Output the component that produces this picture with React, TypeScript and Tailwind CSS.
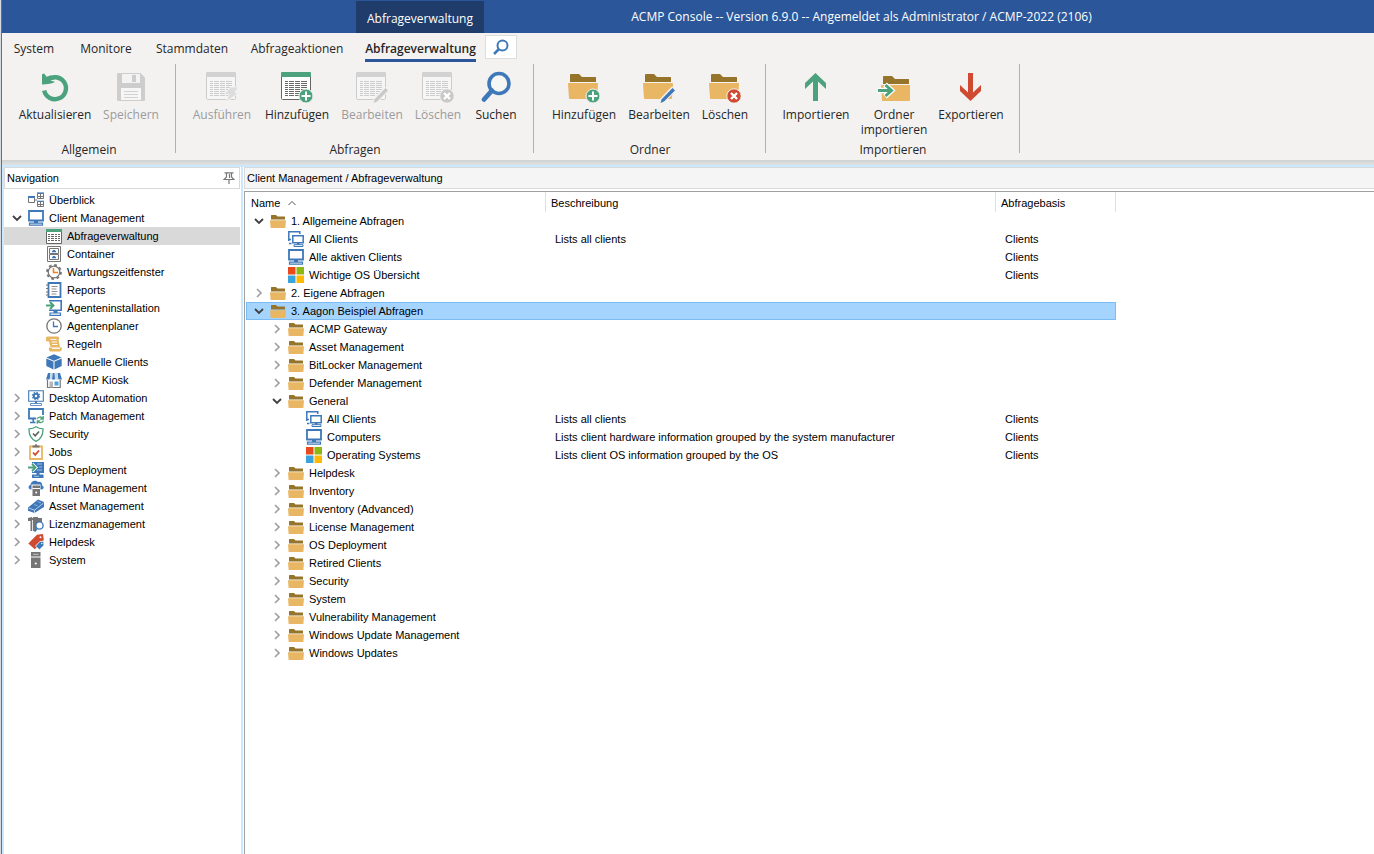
import { Fragment, useState } from "react";
import type { ReactNode } from "react";

const BLUE = "#3e78b8";
const GREEN = "#4ba27c";
const RED = "#cf4a30";
const GRAY = "#757575";
const SAND = "#e9b664";
const BROWN = "#96742a";

function Svg16({ children }: { children: ReactNode }) {
  return (
    <svg className="h-4 w-4 shrink-0" viewBox="0 0 16 16" fill="none" aria-hidden="true">
      {children}
    </svg>
  );
}

function Svg32({ children }: { children: ReactNode }) {
  return (
    <svg className="h-8 w-8 shrink-0" viewBox="0 0 32 32" fill="none" aria-hidden="true">
      {children}
    </svg>
  );
}

/* ---------- large ribbon icons ---------- */

function RefreshIcon() {
  return (
    <Svg32>
      <path d="M5.2 19.5A11 11 0 1 0 8.2 9.4" stroke={GREEN} strokeWidth="4.4" />
      <path d="M3 3.2l2.2-.8 2.4 3.4 4.4-1.6v3.4L9.5 9.8c2 .2 4 0 6.5 1.2-2.5 1.7-7.5 2.4-13 2.4z" fill={GREEN} />
    </Svg32>
  );
}

function SaveIcon() {
  return (
    <Svg32>
      <path d="M3 2h22.500l4.500 4.500V29a1 1 0 0 1-1 1H3a1 1 0 0 1-1-1V3a1 1 0 0 1 1-1z" fill="#cdcdcd" />
      <path d="M7 3h18v9H7z" fill="#f3f3f3" />
      <path d="M17 4h4v7h-4z" fill="#cdcdcd" />
      <path d="M6 17h20v12H6z" fill="#f6f6f6" />
      <path d="M9 20.500h14M9 23.500h14M9 26.500h14" stroke="#d2d2d2" />
    </Svg32>
  );
}

function TableGlyph({ muted }: { muted?: boolean }) {
  const line = muted ? "#cccccc" : "#6a6a6a";
  const rows = [10, 12, 14, 16, 18, 20, 22, 24];
  return (
    <>
      <path d="M.5 4v23.500a1 1 0 0 0 1 1h27a1 1 0 0 0 1-1V4z" fill={muted ? "#f6f6f6" : "#ffffff"} stroke={muted ? "#cccccc" : "#666666"} />
      <path d="M0 2a1 1 0 0 1 1-1h28a1 1 0 0 1 1 1v4H0z" fill={muted ? "#d2d2d2" : GREEN} />
      {rows.map((y) => (
        <path key={y} d={`M4 ${y + 0.5}h3M8 ${y + 0.5}h5M14 ${y + 0.5}h5M20 ${y + 0.5}h6`} stroke={line} />
      ))}
    </>
  );
}

function PlusBadge() {
  return (
    <>
      <circle cx="25" cy="25" r="7" fill={GREEN} stroke="#f3f2f1" />
      <path d="M25 20.500v9M20.500 25h9" stroke="#fff" strokeWidth="2" />
    </>
  );
}

function CrossBadge({ color }: { color: string }) {
  return (
    <>
      <circle cx="25" cy="25" r="7.2" fill={color} stroke="#f3f2f1" />
      <path d="M22 22l6 6M28 22l-6 6" stroke="#fff" strokeWidth="2.4" />
    </>
  );
}

function PencilBadge({ color }: { color: string }) {
  return (
    <>
      <path d="M31 17.500L19 30" stroke="#f3f2f1" strokeWidth="6" />
      <path d="M29.500 17l2.500 2.500-11 11-3.500 1.500 1.200-3.700z" fill={color} />
    </>
  );
}

function FolderGlyph() {
  return (
    <>
      <path d="M2 11V4a1 1 0 0 1 1-1h8l3 3h13.500a.5.5 0 0 1 .5.5V11z" fill={BROWN} />
      <path d="M.8 12h28.400a.8.8 0 0 1 .8.9l-1 14.300a1 1 0 0 1-1 .8H2a1 1 0 0 1-1-.8L0 12.900a.8.8 0 0 1 .8-.9z" fill={SAND} />
    </>
  );
}

function SearchIcon() {
  return (
    <Svg32>
      <path d="M12 19.500L4 28.500" stroke={BLUE} strokeWidth="4.8" strokeLinecap="round" />
      <circle cx="19" cy="12.5" r="10" stroke={BLUE} strokeWidth="3.6" fill="#fff" fillOpacity="0.3" />
    </Svg32>
  );
}

const icons32 = {
  refresh: <RefreshIcon />,
  save: <SaveIcon />,
  run: (
    <Svg32>
      <TableGlyph muted />
      <path d="M25 16h7.500l-3.500 5.500h4L19.500 31.500l3.500-8h-5z" fill="#dddddd" stroke="#f3f2f1" />
    </Svg32>
  ),
  tableAdd: (
    <Svg32>
      <TableGlyph />
      <PlusBadge />
    </Svg32>
  ),
  tableEdit: (
    <Svg32>
      <TableGlyph muted />
      <PencilBadge color="#c9c9c9" />
    </Svg32>
  ),
  tableDelete: (
    <Svg32>
      <TableGlyph muted />
      <CrossBadge color="#c9c9c9" />
    </Svg32>
  ),
  search: <SearchIcon />,
  folderAdd: (
    <Svg32>
      <FolderGlyph />
      <PlusBadge />
    </Svg32>
  ),
  folderEdit: (
    <Svg32>
      <FolderGlyph />
      <PencilBadge color={BLUE} />
    </Svg32>
  ),
  folderDelete: (
    <Svg32>
      <FolderGlyph />
      <CrossBadge color={RED} />
    </Svg32>
  ),
  arrowUp: (
    <Svg32>
      <path d="M15.500 2L26 12v6l-8-7.500V30h-5V10.500L5 18v-6z" fill={GREEN} />
    </Svg32>
  ),
  folderImport: (
    <Svg32>
      <g transform="translate(3 2)">
        <FolderGlyph />
      </g>
      <path d="M0 19.500h13M7 13.500l6.500 6-6.500 6" stroke="#fff" strokeWidth="5.5" />
      <path d="M0 19.500h13M7.500 14l6 5.500-6 5.500" stroke={GREEN} strokeWidth="3" />
    </Svg32>
  ),
  arrowDown: (
    <Svg32>
      <path d="M15.500 30L26 20v-6l-8 7.500V2h-5v19.500L5 14v6z" fill={RED} />
    </Svg32>
  ),
};

/* ---------- small tree icons ---------- */

const icons16 = {
  folder: (
    <Svg16>
      <path d="M1 6.500V2.500A.5.5 0 0 1 1.500 2H6l1.500 1.500h7a.5.5 0 0 1 .5.5v2.500z" fill={BROWN} />
      <path d="M0 7.300h16l-.6 7.200a.6.6 0 0 1-.6.5H1.200a.6.6 0 0 1-.6-.5z" fill={SAND} />
    </Svg16>
  ),
  overview: (
    <Svg16>
      <path d="M.5 5.500h6v5h-6z" fill="#fff" stroke={GRAY} />
      <path d="M0 4h7v2H0z" fill={BLUE} />
      <path d="M7 8h2" stroke={GRAY} />
      <path d="M9.500 1.500h6v5h-6zM9.500 9.500h6v5h-6zM12.500 1v6M9 4.500h7M12.500 9v6M9 12.500h7" stroke={GRAY} />
      <path d="M9 0h7v2H9zM9 8.500h7v1.500H9z" fill={BLUE} fillOpacity="0.6" />
    </Svg16>
  ),
  monitor: (
    <Svg16>
      <path d="M1 1h14v9.500H1z" fill="#fff" stroke={BLUE} strokeWidth="1.8" />
      <path d="M6 11h4v2H6z" fill={BLUE} />
      <path d="M1.500 13.200h13v2h-13z" fill="#fff" stroke={BLUE} strokeWidth="1.2" />
    </Svg16>
  ),
  monitors: (
    <Svg16>
      <path d="M.8 10V.8h11V3M.8 8.500h2.200" stroke={BLUE} strokeWidth="1.5" />
      <path d="M1 12.500h2.500" stroke={BLUE} strokeWidth="1.5" />
      <path d="M4.800 4.800h10.400v7H4.800z" fill="#fff" stroke={BLUE} strokeWidth="1.5" />
      <path d="M9 12h2.500v2H9z" fill={BLUE} />
      <path d="M6 13.700h9v1.800H6z" fill="#fff" stroke={BLUE} />
    </Svg16>
  ),
  windows: (
    <Svg16>
      <path d="M0 0h7.500v7.500H0z" fill="#e8491d" />
      <path d="M8.500 0H16v7.500H8.500z" fill="#8cb811" />
      <path d="M0 8.500h7.500V16H0z" fill="#3ba3dc" />
      <path d="M8.500 8.500H16V16H8.500z" fill="#ffb900" />
    </Svg16>
  ),
  table: (
    <Svg16>
      <path d="M.5 1.500h15v14H.5z" fill="#fff" stroke="#666666" />
      <path d="M0 1h16v3H0z" fill={GREEN} />
      <path d="M2 6.500h2M5 6.500h3M9 6.500h2M12 6.500h2M2 8.500h2M5 8.500h3M9 8.500h2M12 8.500h2M2 10.500h2M5 10.500h3M9 10.500h2M12 10.500h2M2 12.500h2M5 12.500h3M9 12.500h2M12 12.500h2" stroke="#666666" />
    </Svg16>
  ),
  container: (
    <Svg16>
      <path d="M1.500.5h13v15h-13z" fill="#fff" stroke={GRAY} />
      <path d="M3.500 2.500h9v5h-9zM3.500 8.500h9v5h-9z" stroke={GRAY} />
      <path d="M6 5.500h4M6 11.500h4" stroke={BLUE} strokeWidth="1.4" />
      <path d="M7 4.500h2M7 10.500h2" stroke={BLUE} />
    </Svg16>
  ),
  gearClock: (
    <Svg16>
      <circle cx="8" cy="8" r="7" stroke={GRAY} strokeWidth="1.8" strokeDasharray="2.75 2.75" />
      <circle cx="8" cy="8" r="5.8" stroke={GRAY} strokeWidth="1.3" fill="#fff" />
      <path d="M7.500 4v4.500H12" stroke="#ee8322" strokeWidth="1.6" />
    </Svg16>
  ),
  report: (
    <Svg16>
      <path d="M2.500 1h12v14h-12z" fill="#fff" stroke={BLUE} strokeWidth="1.8" />
      <path d="M0 3h3M0 6.500h3M0 10h3M0 13h3" stroke={GRAY} strokeWidth="1.2" />
      <path d="M5.500 4.500h6M5.500 7h5M5.500 9.500h6M5.500 12h5" stroke={GRAY} strokeWidth="0.8" />
    </Svg16>
  ),
  agentInstall: (
    <Svg16>
      <path d="M3 .8h12.200v9.500H3" stroke={BLUE} strokeWidth="1.6" />
      <path d="M7.500 11h4v2h-4z" fill={BLUE} />
      <path d="M4 13h10.500v2.300H4z" fill="#fff" stroke={BLUE} strokeWidth="1.2" />
      <path d="M0 5.500h7M4 2l3.500 3.500L4 9" stroke={GREEN} strokeWidth="2" />
    </Svg16>
  ),
  clock: (
    <Svg16>
      <circle cx="8" cy="8" r="7.2" stroke={GRAY} strokeWidth="1.3" fill="#fff" />
      <path d="M7.500 3.500v5H12" stroke={BLUE} strokeWidth="1.3" />
    </Svg16>
  ),
  scroll: (
    <Svg16>
      <path d="M2 .5h9.500A1.800 1.800 0 0 1 13 3l-.5 1 1.500 7H4.500L3 5.500H1.800A2 2 0 0 1 2 .5z" fill={SAND} />
      <path d="M3 11.500h13c0 2.500-1 4-2.500 4h-9C3 15.500 2.500 13.500 3 11.500z" fill={SAND} />
      <path d="M4.500 3.500h6M5.500 6h5.500M6 8.500h5.500M6 12.500h8" stroke="#fff" strokeWidth="0.9" />
    </Svg16>
  ),
  cube: (
    <Svg16>
      <path d="M8 .3l7.500 3.200L8 6.700.5 3.500z" fill={BLUE} />
      <path d="M.3 4.500l7.200 3.100v8L.3 12z" fill={BLUE} />
      <path d="M15.700 4.500L8.500 7.600v8l7.200-3.600z" fill={BLUE} />
    </Svg16>
  ),
  kiosk: (
    <Svg16>
      <path d="M2 1h2.500L3.700 7.500H0zM8.500 1h-2L6 7.500h3zM11.500 1H14l2 6.500h-3.700z" fill={BLUE} />
      <path d="M4.500 1h2L6 7.500H3.700zM9 1h2.500l.8 6.500H9z" fill="#c9dcef" />
      <path d="M1.500 8v7.500h12.700V8" stroke={GRAY} strokeWidth="1.2" />
      <path d="M3.500 9.500h3.500v6H3.500z" fill="#b5b5b5" />
      <path d="M8.500 9.500h4v4h-4z" fill="#4aa3df" />
    </Svg16>
  ),
  desktopGear: (
    <Svg16>
      <path d="M.7.7h14.600v10.600H.7z" fill="#fff" stroke={BLUE} strokeWidth="1.1" />
      <circle cx="8" cy="6" r="2.2" stroke={BLUE} strokeWidth="2" />
      <circle cx="8" cy="6" r="3.7" stroke={BLUE} strokeWidth="1.1" strokeDasharray="1.5 1.4" />
      <path d="M7 11.500h2v2H7z" fill={BLUE} />
      <path d="M2.500 13.500h11v2h-11z" fill="#fff" stroke={BLUE} strokeWidth="0.8" />
    </Svg16>
  ),
  patch: (
    <Svg16>
      <path d="M8 10.500H1V1h14v6" stroke={BLUE} strokeWidth="1.8" />
      <path d="M5 11l.5 3M2 14.500h5.500" stroke={BLUE} strokeWidth="1.6" />
      <path d="M9 11c1-2.500 4.500-2.500 5.500-.7M15.200 8v3h-3M15.500 12.500c-1 2.500-4.500 2.700-5.700.8M9.300 15.800v-3h3" stroke={GREEN} strokeWidth="1.3" />
    </Svg16>
  ),
  shield: (
    <Svg16>
      <path d="M8 .8c2 1.500 4.500 2 7 2 .2 6-1.500 10.200-7 12.500C2.500 13 .8 8.800 1 2.800c2.500 0 5-.5 7-2z" fill="#fff" stroke={GREEN} strokeWidth="1.3" />
      <path d="M5 7.500l2.200 2.300L11 5.500" stroke="#5f5f5f" strokeWidth="1.6" />
    </Svg16>
  ),
  jobs: (
    <Svg16>
      <path d="M2 2.500h12V15H2z" fill="#fff" stroke={SAND} strokeWidth="1.8" />
      <path d="M4.500 3.500v-2H6.800a1.200 1.200 0 0 1 2.400 0h2.300v2z" fill={GRAY} />
      <path d="M5 8.500L7.200 10.800 11 6.500" stroke={RED} strokeWidth="1.8" />
    </Svg16>
  ),
  osDeploy: (
    <Svg16>
      <path d="M4 0h12v11H4z" fill={BLUE} />
      <path d="M8.500 11h3v2h-3zM4 12.500h11.500V16H4z" fill={BLUE} />
      <path d="M6 14.300h5M14 2H9M14 5h-3M14 8H9" stroke="#cfe0f2" strokeWidth="0.7" />
      <path d="M0 5.500h7M4 2l3.500 3.500L4 9" stroke="#fff" strokeWidth="3.6" />
      <path d="M0 5.500h7M4 2l3.500 3.500L4 9" stroke={GREEN} strokeWidth="1.9" />
    </Svg16>
  ),
  intune: (
    <Svg16>
      <path d="M3 9.500C0 9.500-.2 5.500 2.500 5 2.500 1 7.500-.8 10 2c3-.8 4.500 1.500 4 3.500 2.500.8 2 4-.5 4" fill={BLUE} />
      <path d="M3.500 4.500h9V16h-9z" fill="#fff" />
      <path d="M4.500 5.500h7.500V16H4.500z" fill={GRAY} />
      <path d="M4.500 8.500H12" stroke="#fff" />
      <circle cx="8.200" cy="12.500" r="1" fill="#fff" />
    </Svg16>
  ),
  asset: (
    <Svg16>
      <path d="M0 9.500L10 1.500l6 2.500v5l-9.500 6L0 12.800z" fill={BLUE} />
      <path d="M.5 10l6 2.200L15.500 5M6.500 12v3.500" stroke="#d7e5f3" strokeWidth="0.8" />
      <path d="M6 6.500l3.500 1.200M9.500 3.700l3.500 1.200" stroke="#d7e5f3" strokeWidth="0.5" />
    </Svg16>
  ),
  license: (
    <Svg16>
      <path d="M0 2l4-1v1.500L5.500 1H10v1h4v4l-4 2-2 4v3H2.500V5H0z" fill={GRAY} />
      <path d="M4.500 4v11" stroke="#fff" strokeWidth="0.8" />
      <circle cx="11.500" cy="9.500" r="3.600" fill="#fff" stroke={BLUE} strokeWidth="1.4" />
      <path d="M9 12.500l-2.500 3" stroke={BLUE} strokeWidth="1.8" />
    </Svg16>
  ),
  tags: (
    <Svg16>
      <path d="M9 .8L15 0l.8 6-9 9.200L.3 9.500z" fill={RED} />
      <circle cx="12.500" cy="3.300" r="1" fill="#fff" />
      <path d="M11.800 7.500l4-.3v4.300l-4.300 4.300-4-3.600z" fill={BLUE} stroke="#fff" strokeWidth="0.8" />
      <circle cx="13.800" cy="9.500" r=".7" fill="#fff" />
    </Svg16>
  ),
  server: (
    <Svg16>
      <path d="M3 0h9.500v4.500H3zM3 5.500h9.500V16H3z" fill={GRAY} />
      <path d="M5 2.300h5.500" stroke="#c4c4c4" />
      <circle cx="7.800" cy="11.500" r="1.100" fill="#fff" />
    </Svg16>
  ),
};

type Icon16 = keyof typeof icons16;
type Icon32 = keyof typeof icons32;

/* ---------- data ---------- */

const TABS = [
  { label: "System", width: "w-[64px]" },
  { label: "Monitore", width: "w-[80px]" },
  { label: "Stammdaten", width: "w-[92px]" },
  { label: "Abfrageaktionen", width: "w-[118px]" },
  { label: "Abfrageverwaltung", width: "w-[129px]" },
];

type RibbonItem = { label: string; icon: Icon32; width: string; disabled?: boolean };

const RIBBON: { title: string; items: RibbonItem[] }[] = [
  {
    title: "Allgemein",
    items: [
      { label: "Aktualisieren", icon: "refresh", width: "w-[84px]" },
      { label: "Speichern", icon: "save", width: "w-[68px]", disabled: true },
    ],
  },
  {
    title: "Abfragen",
    items: [
      { label: "Ausführen", icon: "run", width: "w-[70px]", disabled: true },
      { label: "Hinzufügen", icon: "tableAdd", width: "w-[80px]" },
      { label: "Bearbeiten", icon: "tableEdit", width: "w-[70px]", disabled: true },
      { label: "Löschen", icon: "tableDelete", width: "w-[62px]", disabled: true },
      { label: "Suchen", icon: "search", width: "w-[54px]" },
    ],
  },
  {
    title: "Ordner",
    items: [
      { label: "Hinzufügen", icon: "folderAdd", width: "w-[78px]" },
      { label: "Bearbeiten", icon: "folderEdit", width: "w-[72px]" },
      { label: "Löschen", icon: "folderDelete", width: "w-[60px]" },
    ],
  },
  {
    title: "Importieren",
    items: [
      { label: "Importieren", icon: "arrowUp", width: "w-[78px]" },
      { label: "Ordner importieren", icon: "folderImport", width: "w-[78px]" },
      { label: "Exportieren", icon: "arrowDown", width: "w-[76px]" },
    ],
  },
];

type NavItem = { label: string; icon: Icon16; expandable?: boolean; children?: NavItem[] };

const NAV: NavItem[] = [
  { label: "Überblick", icon: "overview" },
  {
    label: "Client Management",
    icon: "monitor",
    expandable: true,
    children: [
      { label: "Abfrageverwaltung", icon: "table" },
      { label: "Container", icon: "container" },
      { label: "Wartungszeitfenster", icon: "gearClock" },
      { label: "Reports", icon: "report" },
      { label: "Agenteninstallation", icon: "agentInstall" },
      { label: "Agentenplaner", icon: "clock" },
      { label: "Regeln", icon: "scroll" },
      { label: "Manuelle Clients", icon: "cube" },
      { label: "ACMP Kiosk", icon: "kiosk" },
    ],
  },
  { label: "Desktop Automation", icon: "desktopGear", expandable: true },
  { label: "Patch Management", icon: "patch", expandable: true },
  { label: "Security", icon: "shield", expandable: true },
  { label: "Jobs", icon: "jobs", expandable: true },
  { label: "OS Deployment", icon: "osDeploy", expandable: true },
  { label: "Intune Management", icon: "intune", expandable: true },
  { label: "Asset Management", icon: "asset", expandable: true },
  { label: "Lizenzmanagement", icon: "license", expandable: true },
  { label: "Helpdesk", icon: "tags", expandable: true },
  { label: "System", icon: "server", expandable: true },
];

type Query = {
  name: string;
  depth: 0 | 1 | 2;
  icon?: Icon16;
  open?: boolean;
  description?: string;
  basis?: string;
};

const QUERIES: Query[] = [
  { name: "1. Allgemeine Abfragen", depth: 0, open: true },
  { name: "All Clients", depth: 1, icon: "monitors", description: "Lists all clients", basis: "Clients" },
  { name: "Alle aktiven Clients", depth: 1, icon: "monitor", basis: "Clients" },
  { name: "Wichtige OS Übersicht", depth: 1, icon: "windows", basis: "Clients" },
  { name: "2. Eigene Abfragen", depth: 0 },
  { name: "3. Aagon Beispiel Abfragen", depth: 0, open: true },
  { name: "ACMP Gateway", depth: 1 },
  { name: "Asset Management", depth: 1 },
  { name: "BitLocker Management", depth: 1 },
  { name: "Defender Management", depth: 1 },
  { name: "General", depth: 1, open: true },
  { name: "All Clients", depth: 2, icon: "monitors", description: "Lists all clients", basis: "Clients" },
  {
    name: "Computers",
    depth: 2,
    icon: "monitor",
    description: "Lists client hardware information grouped by the system manufacturer",
    basis: "Clients",
  },
  {
    name: "Operating Systems",
    depth: 2,
    icon: "windows",
    description: "Lists client OS information grouped by the OS",
    basis: "Clients",
  },
  { name: "Helpdesk", depth: 1 },
  { name: "Inventory", depth: 1 },
  { name: "Inventory (Advanced)", depth: 1 },
  { name: "License Management", depth: 1 },
  { name: "OS Deployment", depth: 1 },
  { name: "Retired Clients", depth: 1 },
  { name: "Security", depth: 1 },
  { name: "System", depth: 1 },
  { name: "Vulnerability Management", depth: 1 },
  { name: "Windows Update Management", depth: 1 },
  { name: "Windows Updates", depth: 1 },
];

const INDENT = { 0: "pl-2", 1: "pl-[26px]", 2: "pl-[44px]" };

/* ---------- components ---------- */

function Chevron({ open }: { open?: boolean }) {
  return (
    <svg className="h-[10px] w-[10px] shrink-0" viewBox="0 0 10 10" fill="none" aria-hidden="true">
      {open ? (
        <path d="M1 3l4 4 4-4" stroke="#404040" strokeWidth="1.8" />
      ) : (
        <path d="M3 1l4 4-4 4" stroke="#a0a0a0" strokeWidth="1.7" />
      )}
    </svg>
  );
}

function TitleBar() {
  return (
    <header className="flex h-[33px] items-end bg-[#2b579a] pl-[354px] text-xs text-white">
      <div className="flex h-8 w-32 shrink-0 items-center justify-center bg-[#1f3c6a] pt-1">Abfrageverwaltung</div>
      <h1 className="flex h-8 flex-1 items-center justify-center truncate pr-[135px]">
        ACMP Console -- Version 6.9.0 -- Angemeldet als Administrator / ACMP-2022 (2106)
      </h1>
    </header>
  );
}

function Ribbon() {
  const [tab, setTab] = useState("Abfrageverwaltung");
  return (
    <section className="bg-[#f3f2f1] text-xs text-[#262626]">
      <div className="flex h-[31px] items-start">
        {TABS.map((t) => (
          <button key={t.label} type="button" onClick={() => setTab(t.label)} className={`flex h-[29px] shrink-0 justify-center ${t.width}`}>
            <span
              className={`flex h-full items-center whitespace-nowrap border-b-[3px] pt-[6px] ${
                t.label === tab ? "border-[#2b579a] font-semibold" : "border-transparent"
              }`}
            >
              {t.label}
            </span>
          </button>
        ))}
        <button type="button" aria-label="Suchen" className="mt-[2px] flex h-6 w-8 items-center justify-center border border-[#dddddd] bg-white">
          <svg className="h-4 w-4" viewBox="0 0 16 16" fill="none" aria-hidden="true">
            <circle cx="9.500" cy="6.500" r="5" stroke={BLUE} strokeWidth="2" />
            <path d="M6 10l-5 5" stroke={BLUE} strokeWidth="2.5" />
          </svg>
        </button>
      </div>
      <div className="flex h-24">
        {RIBBON.map((g) => (
          <div key={g.title} className="flex h-[89px] shrink-0 flex-col border-r border-[#b1b1b1] pl-[11px] pr-[10px]">
            <div className="flex flex-1 items-start">
              {g.items.map((item) => (
                <button
                  key={item.label}
                  type="button"
                  disabled={item.disabled}
                  className={`flex shrink-0 flex-col items-center pt-[7px] leading-[15px] disabled:text-[#9b9b9b] ${item.width}`}
                >
                  {icons32[item.icon]}
                  <span className="mt-1">{item.label}</span>
                </button>
              ))}
            </div>
            <div className="h-[11px] text-center leading-[15px]">{g.title}</div>
          </div>
        ))}
      </div>
    </section>
  );
}

function NavRow({ item, child }: { item: NavItem; child?: boolean }) {
  const active = item.label === "Abfrageverwaltung";
  return (
    <li>
      <a
        href="#"
        aria-current={active ? "page" : undefined}
        className={`flex h-[18px] items-center whitespace-nowrap ${child ? "pl-[42px]" : "pl-2"} ${active ? "bg-[#d9d9d9]" : ""}`}
      >
        {!child && <span className="flex w-4">{item.expandable && <Chevron open={!!item.children} />}</span>}
        {icons16[item.icon]}
        <span className="pl-[5px]">{item.label}</span>
      </a>
    </li>
  );
}

function Navigation() {
  return (
    <nav className="w-[236px] shrink-0 bg-white">
      <div className="flex h-[22px] items-center justify-between border border-[#d9d9d9] pl-[2px] pr-1">
        <h2>Navigation</h2>
        <button type="button" aria-label="Navigation anheften">
          <svg className="h-3 w-3" viewBox="0 0 12 12" fill="none" aria-hidden="true">
            <path d="M1.500.8h9M3.500 1v4L1 7.500h10L8.500 5V1M6 8v4M6.500 2v4" stroke="#777777" strokeWidth="1.2" />
          </svg>
        </button>
      </div>
      <ul className="pt-[2px]">
        {NAV.map((item) => (
          <Fragment key={item.label}>
            <NavRow item={item} />
            {item.children?.map((c) => (
              <NavRow key={c.label} item={c} child />
            ))}
          </Fragment>
        ))}
      </ul>
    </nav>
  );
}

function QueryTable() {
  const [selected, setSelected] = useState("3. Aagon Beispiel Abfragen");
  return (
    <table className="w-[870px] table-fixed border-separate border-spacing-0 text-left">
      <colgroup>
        <col className="w-[300px]" />
        <col className="w-[450px]" />
        <col className="w-[120px]" />
      </colgroup>
      <thead>
        <tr className="h-5">
          <th className="border-r border-[#e0e0e0] p-0 pt-[2px] pl-[5px] font-normal">
            <span className="flex items-center gap-2">
              Name
              <svg className="h-2 w-2" viewBox="0 0 8 8" fill="none" aria-hidden="true">
                <path d="M.5 6L4 2.500 7.500 6" stroke="#555555" />
              </svg>
            </span>
          </th>
          <th className="border-r border-[#e0e0e0] p-0 pt-[2px] pl-[5px] font-normal">Beschreibung</th>
          <th className="border-r border-[#e0e0e0] p-0 pt-[2px] pl-[5px] font-normal">Abfragebasis</th>
        </tr>
      </thead>
      <tbody>
        {QUERIES.map((q, i) => (
          <tr
            key={i}
            onClick={() => setSelected(q.name)}
            className={`h-[18px] whitespace-nowrap ${q.name === selected ? "bg-[#a5d5ff] outline-1 -outline-offset-1 outline-[#7cbcf5]" : ""}`}
          >
            <td className="p-0">
              <span className={`flex items-center ${INDENT[q.depth]}`}>
                <span className="flex w-4">{!q.icon && <Chevron open={q.open} />}</span>
                {icons16[q.icon ?? "folder"]}
                <span className="pl-[5px]">{q.name}</span>
              </span>
            </td>
            <td className="p-0 pl-[9px]">{q.description}</td>
            <td className="p-0 pl-[9px]">{q.basis}</td>
          </tr>
        ))}
      </tbody>
    </table>
  );
}

export default function App() {
  return (
    <div className="border-l border-[#d5dae0] bg-white font-['Open_Sans',sans-serif]">
      <div className="flex min-h-screen flex-col border-l border-[#66717d]">
        <TitleBar />
        <Ribbon />
        <div className="h-[5px] bg-linear-to-b from-[#cfd1d1] to-[#dfe2e4]" />
        <div className="flex flex-1 border-t-2 border-l-2 border-[#cce8ff] font-['Liberation_Sans',sans-serif] text-[11px] leading-[18px] text-black">
          <Navigation />
          <div className="w-1 shrink-0 border-x border-white bg-[#cce8ff]" />
          <main className="flex min-w-0 flex-1 flex-col gap-[2px]">
            <h2 className="h-[22px] border border-r-0 border-[#d9d9d9] bg-[#f5f5f5] pl-[2px] leading-5">Client Management / Abfrageverwaltung</h2>
            <div className="flex-1 border-t border-l border-[#a0a0a0] pl-px">
              <QueryTable />
            </div>
          </main>
        </div>
      </div>
    </div>
  );
}
